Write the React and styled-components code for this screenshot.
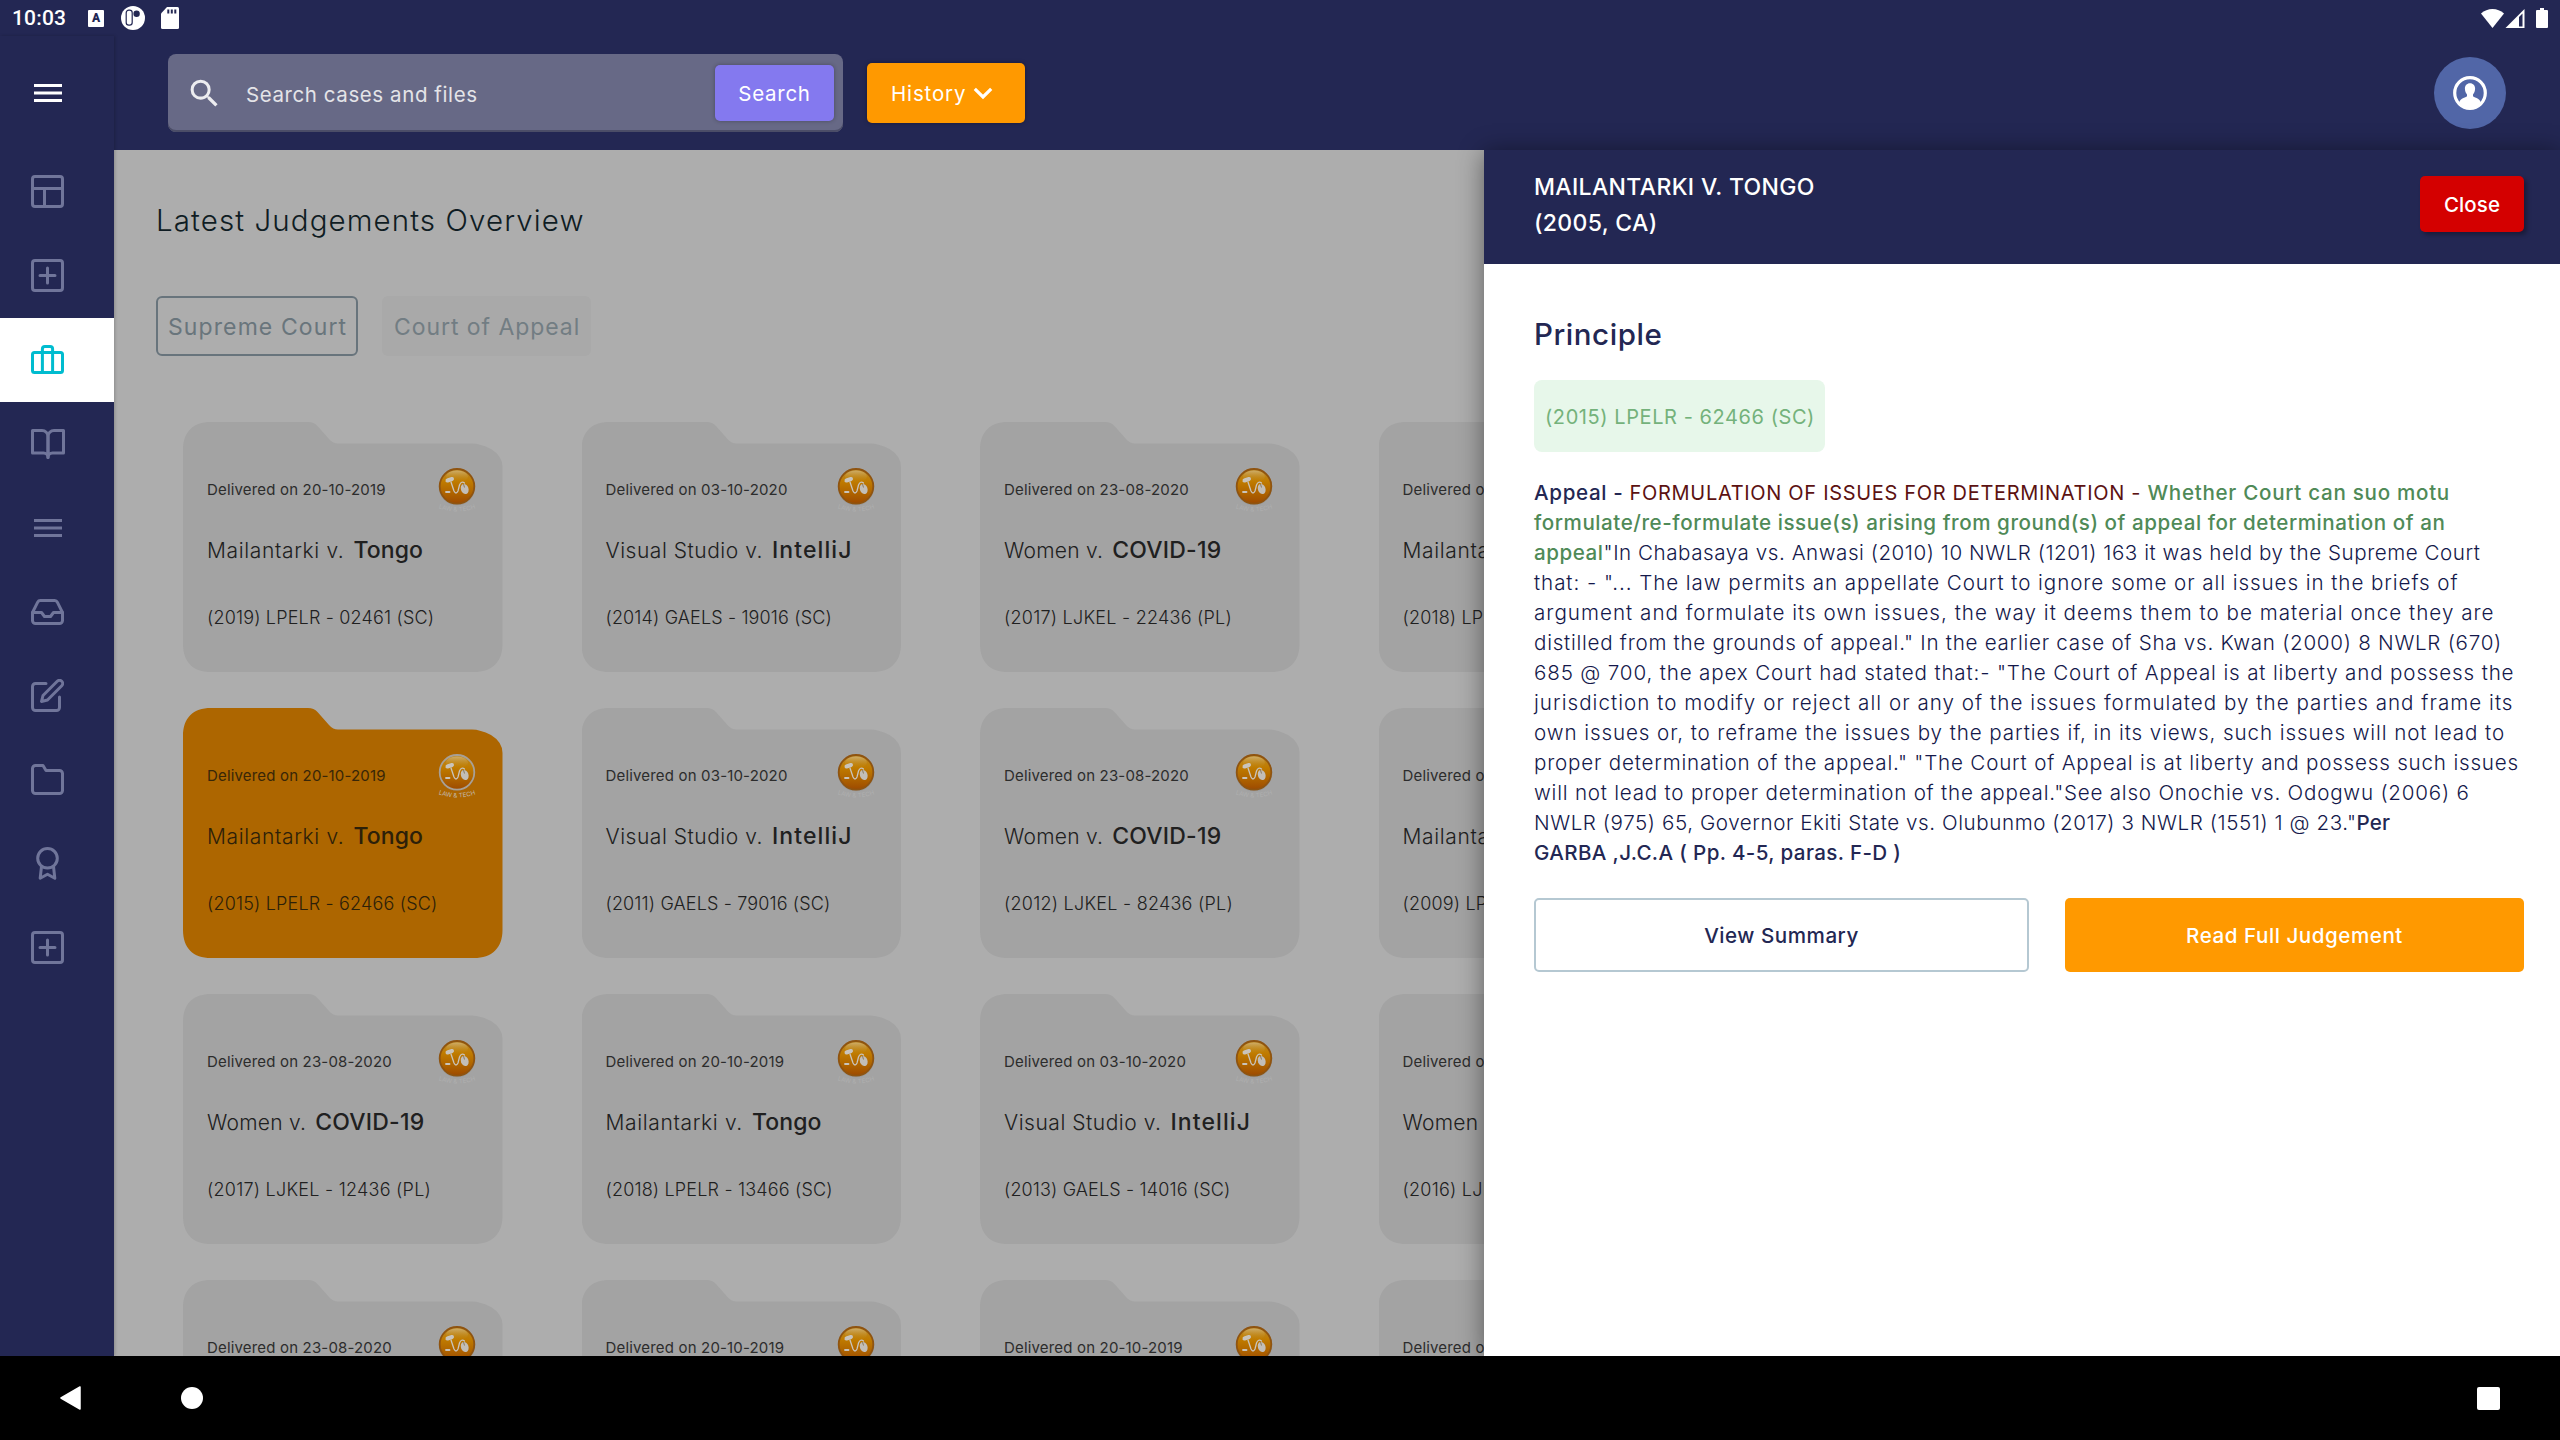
import React from "react";
import styled, { createGlobalStyle, css } from "styled-components";

const navy = "#232753";
const orange = "#ff9900";

const GlobalStyle = createGlobalStyle`
  * { box-sizing: border-box; }
  body { margin: 0; background: #000; font-family: Inter, "Open Sans", sans-serif; }
  svg { display: block; flex: none; }
  button { font-family: inherit; border: 0; margin: 0; padding: 0; }
`;

/* ---------- shell ---------- */

const Screen = styled.div`
  width: 2560px;
  height: 1440px;
  display: flex;
  flex-direction: column;
  overflow: hidden;
  background: ${navy};
`;

const StatusBar = styled.div`
  flex: none;
  height: 36px;
  display: flex;
  align-items: center;
  padding: 0 12px;
`;

const Clock = styled.span`
  width: 76px;
  font: 500 21px/24px Roboto, sans-serif;
  letter-spacing: 0.16px;
  color: #fff;
`;

const StatusIcons = styled.div`
  display: flex;
  align-items: center;
  gap: 16px;
`;

const SystemIcons = styled.div`
  margin-left: auto;
  display: flex;
  align-items: center;
`;

const Body = styled.div`
  flex: 1;
  min-height: 0;
  display: flex;
`;

const Sidebar = styled.nav`
  flex: none;
  width: 114px;
  position: relative;
  z-index: 2;
  background: ${navy};
  box-shadow: 1px 0 3px rgba(0, 0, 0, 0.2);
`;

const SideItem = styled.div`
  height: ${(p) => (p.$tall ? 114 : 84)}px;
  padding: 0 19px ${(p) => (p.$tall ? 0 : 1)}px 0;
  display: flex;
  align-items: center;
  justify-content: center;
  color: ${(p) => (p.$active ? "#00bccf" : p.$tall ? "#fff" : "#70759a")};
  background: ${(p) => (p.$active ? "#fff" : "transparent")};
`;

const Column = styled.div`
  flex: 1;
  min-width: 0;
  display: flex;
  flex-direction: column;
`;

const TopBar = styled.header`
  flex: none;
  height: 114px;
  display: flex;
  align-items: center;
  padding: 0 54px;
`;

const SearchBox = styled.div`
  width: 675px;
  height: 78px;
  display: flex;
  align-items: center;
  padding: 0 9px 0 18px;
  border-radius: 8px;
  background: #676986;
  box-shadow: inset 0 -2px 0 #4b4d67;
`;

const Placeholder = styled.span`
  flex: 1;
  margin-left: 23px;
  padding-top: 4px;
  font-size: 20.5px;
  line-height: 30px;
  letter-spacing: 0.58px;
  color: #e4e4e8;
`;

const SearchButton = styled.button`
  width: 119px;
  height: 56px;
  padding-top: 1px;
  border-radius: 5px;
  background: #8479ef;
  box-shadow: 0 0 4px rgba(0, 0, 0, 0.3);
  color: #fff;
  font-size: 20.5px;
  letter-spacing: 0.72px;
`;

const HistoryButton = styled.button`
  width: 158px;
  height: 60px;
  margin-left: 24px;
  padding: 1px 0 0 24px;
  display: flex;
  align-items: center;
  gap: 7px;
  border-radius: 5px;
  background: ${orange};
  box-shadow: 0 0 4px rgba(0, 0, 0, 0.35);
  color: #fff;
  font-size: 20.5px;
  letter-spacing: 0.86px;
`;

const Avatar = styled.div`
  margin-left: auto;
  width: 72px;
  height: 72px;
  border-radius: 50%;
  background: #5166a7;
  display: flex;
  align-items: center;
  justify-content: center;
`;

const Content = styled.div`
  flex: 1;
  min-height: 0;
  display: flex;
`;

/* ---------- overview ---------- */

const Overview = styled.main`
  flex: 1;
  min-width: 0;
  overflow: hidden;
  padding: 50px 0 0 42px;
  background: #adadad;
`;

const PageTitle = styled.h1`
  margin: 0;
  font-size: 29.5px;
  font-weight: 300;
  line-height: 40px;
  letter-spacing: 1.1px;
  color: #0f1c23;
`;

const Tabs = styled.div`
  display: flex;
  gap: 24px;
  margin-top: 56px;
`;

const Tab = styled.button`
  width: ${(p) => p.$width}px;
  height: 60px;
  padding: 2px 0 0 10px;
  text-align: left;
  border: 2px solid ${(p) => (p.$active ? "#68747c" : "transparent")};
  border-radius: 6px;
  background: ${(p) => (p.$active ? "transparent" : "#a9a9a9")};
  background-clip: border-box;
  background-origin: border-box;
  font-size: 23px;
  letter-spacing: ${(p) => (p.$active ? 1.1 : 0.94)}px;
  color: ${(p) => (p.$active ? "#69757c" : "#727d83")};
`;

const Folders = styled.div`
  display: grid;
  grid-template-columns: repeat(4, 320px);
  grid-auto-rows: 250px;
  gap: 36px 78.5px;
  margin: 66px 0 0 27px;
`;

const Folder = styled.article`
  padding: 42px 24px 0;
  background: ${(p) => (p.$active ? "#ad6600" : "#a3a3a3")};
  color: ${(p) => (p.$active ? "#2c2009" : "#202020")};
  clip-path: path("M0 28C0 10 10 0 28 0H125Q131 0 134.5 4L146 17Q150 21.5 155 21.5H289Q297 21.5 308 27Q319.5 34 319.5 45V222C319.5 240 309 250 291 250H28C10 250 0 240 0 222Z");
`;

const FolderTop = styled.div`
  height: 48px;
  display: flex;
  justify-content: space-between;
`;

const Delivered = styled.span`
  margin-top: 16px;
  font-size: 15px;
  line-height: 20px;
  letter-spacing: 0.17px;
  opacity: 0.9;
`;

const Parties = styled.div`
  margin-top: 23px;
  display: flex;
  align-items: baseline;
  gap: 9px;
  line-height: 30px;
  white-space: nowrap;
`;

const Appellant = styled.span`
  font-size: 21px;
  font-weight: 300;
  letter-spacing: ${(p) => p.$track}px;
`;

const Respondent = styled.strong`
  font-size: 23px;
  font-weight: 500;
  letter-spacing: ${(p) => p.$track}px;
`;

const Citation = styled.div`
  margin-top: 40px;
  font-size: 18px;
  font-weight: 300;
  line-height: 24px;
  letter-spacing: ${(p) => p.$track}px;
  white-space: nowrap;
`;

/* ---------- drawer ---------- */

const Drawer = styled.aside`
  flex: none;
  width: 1076px;
  position: relative;
  z-index: 1;
  background: #fff;
  color: ${navy};
  box-shadow: 0 2px 24px rgba(0, 0, 0, 0.45);
`;

const DrawerHeader = styled.div`
  height: 114px;
  padding: 0 36px 6px 50px;
  display: flex;
  align-items: center;
  justify-content: space-between;
  background: ${navy};
`;

const DrawerTitle = styled.h2`
  margin: 2px 0 0;
  font-size: 23px;
  font-weight: 500;
  line-height: 36px;
  letter-spacing: 0.35px;
  color: #fff;
`;

const CloseButton = styled.button`
  width: 104px;
  height: 56px;
  padding-top: 1px;
  border-radius: 5px;
  background: #d40000;
  box-shadow: 3px 3px 4px rgba(0, 0, 0, 0.3);
  color: #fff;
  font-size: 20.5px;
  font-weight: 500;
  letter-spacing: 0.09px;
`;

const DrawerBody = styled.div`
  padding: 50px 36px 0 50px;
`;

const SectionTitle = styled.h3`
  margin: 0;
  font-size: 29.5px;
  font-weight: 500;
  line-height: 40px;
  letter-spacing: 0.55px;
`;

const Tag = styled.div`
  width: 291px;
  height: 72px;
  margin-top: 26px;
  padding: 2px 0 0 11px;
  display: flex;
  align-items: center;
  border-radius: 8px;
  background: #e7f7ea;
  color: #74b27b;
  font-size: 20px;
  letter-spacing: 0.57px;
  white-space: nowrap;
`;

const Principle = styled.p`
  margin: 26px 0 0;
  font-size: 20.6px;
  font-weight: 300;
  line-height: 30px;
  color: #14184a;
`;

const Line = styled.span`
  display: block;
  white-space: pre;
  letter-spacing: ${(p) => p.$track}px;
`;

const tones = {
  strong: css`font-weight: 500; color: ${navy};`,
  issue: css`font-size: 20px; font-weight: 400; color: #5c1212;`,
  question: css`font-weight: 500; color: #4f8a57;`,
};

const Part = styled.span`
  ${(p) => tones[p.$tone]}
  letter-spacing: ${(p) => p.$track}px;
`;

const Actions = styled.div`
  display: flex;
  gap: 36px;
  margin-top: 30px;
`;

const Action = styled.button`
  width: ${(p) => (p.$primary ? 459 : 495)}px;
  height: 74px;
  padding-top: 1px;
  border: ${(p) => (p.$primary ? "0" : "2px solid #b5c8d2")};
  border-radius: 5px;
  background: ${(p) => (p.$primary ? orange : "#fff")};
  color: ${(p) => (p.$primary ? "#fff" : navy)};
  font-size: 20.6px;
  font-weight: 500;
  letter-spacing: 0.54px;
`;

/* ---------- android navigation ---------- */

const NavBar = styled.footer`
  flex: none;
  height: 84px;
  display: flex;
  align-items: center;
  padding: 0 60px;
  background: #000;
`;

const HomeDot = styled.i`
  width: 22px;
  height: 22px;
  margin-left: 100px;
  border-radius: 50%;
  background: #fff;
`;

const RecentsSquare = styled.i`
  width: 23px;
  height: 23px;
  margin-left: auto;
  border-radius: 2px;
  background: #fff;
`;

/* ---------- icons ---------- */

const Stroke = ({ w, h, box, children }) => (
  <svg width={w} height={h} viewBox={box || `0 0 ${w} ${h}`} fill="none" stroke="currentColor"
    strokeWidth={box ? 2 : 3} strokeLinecap="round" strokeLinejoin="round">
    {children}
  </svg>
);

const BarsIcon = () => (
  <svg width="28" height="18" viewBox="0 0 28 18" fill="currentColor">
    <rect width="28" height="3" />
    <rect y="7.5" width="28" height="3" />
    <rect y="15" width="28" height="3" />
  </svg>
);

const LayoutIcon = () => (
  <Stroke w={33} h={33}>
    <rect x="1.5" y="1.5" width="30" height="30" rx="2.5" />
    <path d="M1.5 13.5h30M13.5 13.5v18" />
  </Stroke>
);

const PlusSquareIcon = () => (
  <Stroke w={33} h={33}>
    <rect x="1.5" y="1.5" width="30" height="30" rx="2.5" />
    <path d="M16.5 9v15M9 16.5h15" />
  </Stroke>
);

const BriefcaseIcon = () => (
  <Stroke w={33} h={29}>
    <rect x="1.5" y="7.5" width="30" height="20" rx="2" />
    <path d="M11.4 27.5V4a2.5 2.5 0 0 1 2.5-2.5h5.2A2.5 2.5 0 0 1 21.6 4v23.5" />
  </Stroke>
);

const BookIcon = () => (
  <Stroke w={34} h={30}>
    <path d="M1.5 1.5h9.5a6 6 0 0 1 6 6v21a4.5 4.5 0 0 0-4.5-4.5h-11z" />
    <path d="M32.5 1.5h-9.5a6 6 0 0 0-6 6v21a4.5 4.5 0 0 1 4.5-4.5h11z" />
  </Stroke>
);

const InboxIcon = () => (
  <Stroke w={33} h={26}>
    <path d="M31.5 13.5h-9l-3 4h-6l-3-4h-9" />
    <path d="M6.7 3.1L1.5 13.5v8a3 3 0 0 0 3 3h24a3 3 0 0 0 3-3v-8L26.3 3.1a3 3 0 0 0-2.6-1.6H9.3a3 3 0 0 0-2.6 1.6z" />
  </Stroke>
);

const EditIcon = () => (
  <Stroke w={33} h={33} box="1 1 22 22">
    <path d="M11 4H4a2 2 0 0 0-2 2v14a2 2 0 0 0 2 2h14a2 2 0 0 0 2-2v-7" />
    <path d="M18.5 2.5a2.121 2.121 0 0 1 3 3L12 15l-4 1 1-4 9.5-9.5z" />
  </Stroke>
);

const FolderIcon = () => (
  <Stroke w={33} h={31}>
    <path d="M31.5 26.5a3 3 0 0 1-3 3h-24a3 3 0 0 1-3-3v-22a3 3 0 0 1 3-3h7.5l3 5h13.5a3 3 0 0 1 3 3z" />
  </Stroke>
);

const AwardIcon = () => (
  <Stroke w={23} h={33}>
    <circle cx="11.5" cy="11.3" r="9.8" />
    <path d="M5.5 19.5L4.2 31.2l7.3-4 7.3 4-1.3-11.7" />
  </Stroke>
);

const SearchIcon = () => (
  <svg width="37" height="37" viewBox="0 0 24 24" fill="#ededf0">
    <path d="M15.5 14h-.79l-.28-.27A6.47 6.47 0 0 0 16 9.5 6.5 6.5 0 1 0 9.5 16c1.61 0 3.09-.59 4.23-1.57l.27.28v.79l5 4.99L20.49 19l-4.99-5zm-6 0C7.01 14 5 11.99 5 9.5S7.01 5 9.5 5 14 7.01 14 9.5 11.99 14 9.5 14z" />
  </svg>
);

const ChevronIcon = () => (
  <svg width="20" height="13" viewBox="0 0 20 13" fill="none" stroke="#fff" strokeWidth="3.2">
    <path d="M1.8 1.8L10 10l8.2-8.2" />
  </svg>
);

const UserIcon = () => (
  <svg width="34" height="34" viewBox="0 0 34 34">
    <circle cx="17" cy="17" r="15.3" fill="none" stroke="#fff" strokeWidth="3.2" />
    <path d="M17 7.2c3.2 0 5.1 2.3 5.1 5.4 0 2.6-.9 4.6-2.1 5.9v1.8c0 .9 7 1.9 7.8 6.2A15 15 0 0 1 17 32.5a15 15 0 0 1-10.8-6c.8-4.3 7.8-5.3 7.8-6.2v-1.8c-1.2-1.3-2.1-3.3-2.1-5.9 0-3.1 1.9-5.4 5.1-5.4z" fill="#fff" />
  </svg>
);

const KeyboardBadge = styled.span`
  width: 16px;
  height: 17px;
  margin-right: 1px;
  border-radius: 1px;
  background: #fff;
  color: ${navy};
  font: 900 12px/17px Roboto, sans-serif;
  text-align: center;
`;

const DebugIcon = () => (
  <svg width="24" height="24" viewBox="0 0 24 24">
    <circle cx="12" cy="12" r="12" fill="#fff" />
    <rect x="5.2" y="4.2" width="6" height="15" rx="2.6" fill="#fff" stroke={navy} strokeWidth="1.2" />
    <circle cx="15.6" cy="7.8" r="3.2" fill={navy} />
  </svg>
);

const SdIcon = () => (
  <svg width="18" height="22" viewBox="0 0 18 22">
    <path d="M6 0h10.5a1.5 1.5 0 0 1 1.5 1.5v19a1.5 1.5 0 0 1-1.5 1.5h-15A1.5 1.5 0 0 1 0 20.5V6.5z" fill="#fff" />
    <path d="M7.3 2.5v4M10.8 2.5v4M14.3 2.5v4" stroke={navy} strokeWidth="2" />
  </svg>
);

const Signals = () => (
  <svg width="68" height="21" viewBox="0 0 68 21" fill="#fff">
    <path d="M1 5.5Q6 1 12.5 1T24 5.5L12.5 20z" />
    <path d="M25.5 20L44.5 1v19z" />
    <path d="M39 9l3.5-3.5v13H39z" fill={navy} />
    <path d="M60 0h4v2h3a1 1 0 0 1 1 1v16a1 1 0 0 1-1 1H57a1 1 0 0 1-1-1V3a1 1 0 0 1 1-1h3z" />
  </svg>
);

const BackIcon = () => (
  <svg width="21" height="24" viewBox="0 0 21 24">
    <path d="M1 12L20 1v22z" fill="#fff" stroke="#fff" strokeWidth="1.5" strokeLinejoin="round" />
  </svg>
);

const sealPalette = {
  idle: { ring: "#8f5410", halo: "#8f8f8f", text: "#afafaf" },
  active: { ring: "#a8a096", halo: "#a0661c", text: "#c3b9ab" },
};

const Seal = ({ active }) => {
  const id = React.useId();
  const c = active ? sealPalette.active : sealPalette.idle;
  return (
    <svg width="44" height="48" viewBox="0 0 44 48" overflow="visible">
      <defs>
        <linearGradient id={`${id}f`} x1="0" y1="0" x2="0" y2="1">
          <stop offset="0" stopColor="#b98a2c" />
          <stop offset="0.35" stopColor="#c07c00" />
          <stop offset="0.7" stopColor="#ae6300" />
          <stop offset="1" stopColor="#9d4a00" />
        </linearGradient>
        <linearGradient id={`${id}g`} x1="0" y1="0" x2="0" y2="1">
          <stop offset="0" stopColor="#d0b070" stopOpacity="0.9" />
          <stop offset="1" stopColor="#c08000" stopOpacity="0" />
        </linearGradient>
        <path id={`${id}p`} d="M0 43Q22 52 44 43" />
      </defs>
      <circle cx="22" cy="23" r="18.3" fill={c.halo} opacity="0.6" />
      <circle cx="22" cy="22.3" r="17.3" fill={`url(#${id}f)`} stroke={c.ring} strokeWidth="1.8" />
      <ellipse cx="22" cy="12.5" rx="11" ry="6" fill={`url(#${id}g)`} />
      <g stroke="#c9c4bc" fill="none" strokeLinecap="round">
        <path d="M12.500 16.500l4.500-1.500" strokeWidth="4" />
        <path d="M16 18l3 9q2 4 4 0l1.500-6q2-4.500 5-2" strokeWidth="1.3" />
        <path d="M11 28h3.500" strokeWidth="1.8" />
      </g>
      <ellipse cx="29.7" cy="25" rx="3.8" ry="5.2" transform="rotate(-18 29.7 25)" fill="#c2beb8" />
      <path d="M28.500 20l1 3.500" stroke="#8a7a60" strokeWidth="1" />
      <text fontSize="6.2" fontFamily="Inter, sans-serif" fill={c.text} textAnchor="middle">
        <textPath href={`#${id}p`} startOffset="50%">LAW &amp; TECH</textPath>
      </text>
    </svg>
  );
};

/* ---------- data ---------- */

const cases = {
  mailantarki: { first: "Mailantarki v.", second: "Tongo", t1: 0.64, t2: 0.1, series: "LPELR", court: "SC", t3: 0.17 },
  studio: { first: "Visual Studio v.", second: "IntelliJ", t1: 0.52, t2: 1.1, series: "GAELS", court: "SC", t3: 0.14 },
  women: { first: "Women v.", second: "COVID-19", t1: 0.26, t2: 0.2, series: "LJKEL", court: "PL", t3: 0.24 },
};

const folders = [
  ["mailantarki", "20-10-2019", "2019", "02461"],
  ["studio", "03-10-2020", "2014", "19016"],
  ["women", "23-08-2020", "2017", "22436"],
  ["mailantarki", "20-10-2019", "2018", "02461"],
  ["mailantarki", "20-10-2019", "2015", "62466", true],
  ["studio", "03-10-2020", "2011", "79016"],
  ["women", "23-08-2020", "2012", "82436"],
  ["mailantarki", "20-10-2019", "2009", "62466"],
  ["women", "23-08-2020", "2017", "12436"],
  ["mailantarki", "20-10-2019", "2018", "13466"],
  ["studio", "03-10-2020", "2013", "14016"],
  ["women", "23-08-2020", "2016", "12436"],
  ["women", "23-08-2020", "2017", "32436"],
  ["mailantarki", "20-10-2019", "2018", "33466"],
  ["mailantarki", "20-10-2019", "2013", "34016"],
  ["studio", "03-10-2020", "2016", "32436"],
];

const sideIcons = [LayoutIcon, PlusSquareIcon, BriefcaseIcon, BookIcon, BarsIcon, InboxIcon, EditIcon, FolderIcon, AwardIcon, PlusSquareIcon];

const plainLines = [
  [0.93, 'that: - "... The law permits an appellate Court to ignore some or all issues in the briefs of'],
  [1.02, "argument and formulate its own issues, the way it deems them to be material once they are"],
  [0.73, 'distilled from the grounds of appeal." In the earlier case of Sha vs. Kwan (2000) 8 NWLR (670)'],
  [0.84, '685 @ 700, the apex Court had stated that:- "The Court of Appeal is at liberty and possess the'],
  [1.03, "jurisdiction to modify or reject all or any of the issues formulated by the parties and frame its"],
  [0.91, "own issues or, to reframe the issues by the parties if, in its views, such issues will not lead to"],
  [0.8, 'proper determination of the appeal." "The Court of Appeal is at liberty and possess such issues'],
  [0.78, 'will not lead to proper determination of the appeal."See also Onochie vs. Odogwu (2006) 6'],
];

const FolderCard = ({ item: [key, date, year, number, active] }) => {
  const c = cases[key];
  return (
    <Folder $active={active}>
      <FolderTop>
        <Delivered>Delivered on {date}</Delivered>
        <Seal active={active} />
      </FolderTop>
      <Parties>
        <Appellant $track={c.t1}>{c.first}</Appellant>
        <Respondent $track={c.t2}>{c.second}</Respondent>
      </Parties>
      <Citation $track={c.t3}>{`(${year}) ${c.series} - ${number} (${c.court})`}</Citation>
    </Folder>
  );
};

export default function App() {
  return (
    <Screen>
      <GlobalStyle />
      <StatusBar>
        <Clock>10:03</Clock>
        <StatusIcons>
          <KeyboardBadge>A</KeyboardBadge>
          <DebugIcon />
          <SdIcon />
        </StatusIcons>
        <SystemIcons>
          <Signals />
        </SystemIcons>
      </StatusBar>

      <Body>
        <Sidebar>
          <SideItem $tall><BarsIcon /></SideItem>
          {sideIcons.map((Icon, i) => (
            <SideItem key={i} $active={i === 2}><Icon /></SideItem>
          ))}
        </Sidebar>

        <Column>
          <TopBar>
            <SearchBox>
              <SearchIcon />
              <Placeholder>Search cases and files</Placeholder>
              <SearchButton>Search</SearchButton>
            </SearchBox>
            <HistoryButton>History<ChevronIcon /></HistoryButton>
            <Avatar><UserIcon /></Avatar>
          </TopBar>

          <Content>
            <Overview>
              <PageTitle>Latest Judgements Overview</PageTitle>
              <Tabs>
                <Tab $active $width={202}>Supreme Court</Tab>
                <Tab $width={209}>Court of Appeal</Tab>
              </Tabs>
              <Folders>
                {folders.map((item, i) => <FolderCard key={i} item={item} />)}
              </Folders>
            </Overview>

            <Drawer>
              <DrawerHeader>
                <DrawerTitle>MAILANTARKI V. TONGO<br />(2005, CA)</DrawerTitle>
                <CloseButton>Close</CloseButton>
              </DrawerHeader>
              <DrawerBody>
                <SectionTitle>Principle</SectionTitle>
                <Tag>(2015) LPELR - 62466 (SC)</Tag>
                <Principle>
                  <Line>
                    <Part $tone="strong" $track={0.65}>{"Appeal - "}</Part>
                    <Part $tone="issue" $track={0.68}>{"FORMULATION OF ISSUES FOR DETERMINATION - "}</Part>
                    <Part $tone="question" $track={0.71}>Whether Court can suo motu</Part>
                  </Line>
                  <Line>
                    <Part $tone="question" $track={0.55}>formulate/re-formulate issue(s) arising from ground(s) of appeal for determination of an</Part>
                  </Line>
                  <Line $track={0.54}>
                    <Part $tone="question" $track={0.53}>appeal</Part>
                    {'"In Chabasaya vs. Anwasi (2010) 10 NWLR (1201) 163 it was held by the Supreme Court'}
                  </Line>
                  {plainLines.map(([track, text]) => <Line key={text} $track={track}>{text}</Line>)}
                  <Line $track={0.57}>
                    {'NWLR (975) 65, Governor Ekiti State vs. Olubunmo (2017) 3 NWLR (1551) 1 @ 23."'}
                    <Part $tone="strong" $track={0.16}>Per</Part>
                  </Line>
                  <Line>
                    <Part $tone="strong" $track={0.36}>GARBA ,J.C.A ( Pp. 4-5, paras. F-D )</Part>
                  </Line>
                </Principle>
                <Actions>
                  <Action>View Summary</Action>
                  <Action $primary>Read Full Judgement</Action>
                </Actions>
              </DrawerBody>
            </Drawer>
          </Content>
        </Column>
      </Body>

      <NavBar>
        <BackIcon />
        <HomeDot />
        <RecentsSquare />
      </NavBar>
    </Screen>
  );
}
